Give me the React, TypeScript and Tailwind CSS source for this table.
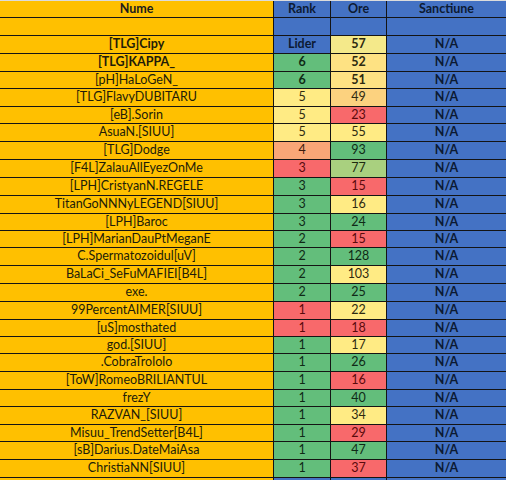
const ROWS = [
  { name: '[TLG]Cipy', rank: 'Lider', ore: '57', rc: 'blue', oc: 'pale', bold: true, h: 18 },
  { name: '[TLG]KAPPA_', rank: '6', ore: '52', rc: 'green', oc: 'peach', bold: true, h: 18 },
  { name: '[pH]HaLoGeN_', rank: '6', ore: '51', rc: 'green', oc: 'peach', strong: true, h: 17 },
  { name: '[TLG]FlavyDUBITARU', rank: '5', ore: '49', rc: 'yellow', oc: 'orange', h: 18 },
  { name: '[eB].Sorin', rank: '5', ore: '23', rc: 'yellow', oc: 'red', h: 17 },
  { name: 'AsuaN.[SIUU]', rank: '5', ore: '55', rc: 'yellow', oc: 'yellow', h: 18 },
  { name: '[TLG]Dodge', rank: '4', ore: '93', rc: 'salmon', oc: 'green', h: 18 },
  { name: '[F4L]ZalauAllEyezOnMe', rank: '3', ore: '77', rc: 'red', oc: 'lime', h: 18 },
  { name: '[LPH]CristyanN.REGELE', rank: '3', ore: '15', rc: 'green', oc: 'red', h: 18 },
  { name: 'TitanGoNNNyLEGEND[SIUU]', rank: '3', ore: '16', rc: 'green', oc: 'yellow', h: 18 },
  { name: '[LPH]Baroc', rank: '3', ore: '24', rc: 'green', oc: 'green', h: 17 },
  { name: '[LPH]MarianDauPtMeganE', rank: '2', ore: '15', rc: 'green', oc: 'red', h: 17 },
  { name: 'C.Spermatozoidul[uV]', rank: '2', ore: '128', rc: 'green', oc: 'green', h: 18 },
  { name: 'BaLaCi_SeFuMAFIEI[B4L]', rank: '2', ore: '103', rc: 'green', oc: 'yellow', h: 18 },
  { name: 'exe.', rank: '2', ore: '25', rc: 'green', oc: 'green', h: 18 },
  { name: '99PercentAIMER[SIUU]', rank: '1', ore: '22', rc: 'red', oc: 'yellow', h: 18 },
  { name: '[uS]mosthated', rank: '1', ore: '18', rc: 'red', oc: 'red', h: 17 },
  { name: 'god.[SIUU]', rank: '1', ore: '17', rc: 'green', oc: 'yellow', h: 17 },
  { name: '.CobraTrololo', rank: '1', ore: '26', rc: 'green', oc: 'green', h: 18 },
  { name: '[ToW]RomeoBRILIANTUL', rank: '1', ore: '16', rc: 'green', oc: 'red', h: 18 },
  { name: 'frezY', rank: '1', ore: '40', rc: 'green', oc: 'green', h: 17 },
  { name: 'RAZVAN_[SIUU]', rank: '1', ore: '34', rc: 'green', oc: 'yellow', h: 18 },
  { name: 'Misuu_TrendSetter[B4L]', rank: '1', ore: '29', rc: 'green', oc: 'red', h: 17 },
  { name: '[sB]Darius.DateMaiAsa', rank: '1', ore: '47', rc: 'green', oc: 'green', h: 18 },
  { name: 'ChristiaNN[SIUU]', rank: '1', ore: '37', rc: 'green', oc: 'red', h: 18 },
]

const FILL: Record<string, string> = {
  blue: 'bg-[#4472c4] text-[#0c1a33] font-bold',
  green: 'bg-[#63be7b] text-[#0f2a16]',
  red: 'bg-[#f8696b] text-[#5a0a0c]',
  yellow: 'bg-[#ffeb84] text-[#2e2a10]',
  pale: 'bg-[#f4e98a] text-[#2e2a10]',
  peach: 'bg-[#fee283] text-[#2e2a10]',
  orange: 'bg-[#fcd27f] text-[#2e2a10]',
  salmon: 'bg-[#f9a677] text-[#3a1a0c]',
  lime: 'bg-[#a9d07f] text-[#1e2a10]',
}

const line = 'border-b border-[#141414]'
const cell = 'flex items-center justify-center border-r border-[#141414]'

function Row({ h, children }: { h: number; children: React.ReactNode }) {
  return (
    <div
      className={`grid grid-cols-[274px_57px_56px_119px] ${line}`}
      style={{ height: h }}
    >
      {children}
    </div>
  )
}

export default function App() {
  return (
    <div
      className="w-[506px] h-[480px] overflow-hidden bg-white text-[12.5px] leading-none"
      style={{ fontFamily: 'Lato, "Noto Sans", sans-serif' }}
    >
      <div className="h-px bg-[#dcdcdc]" />

      <Row h={17}>
        <div className={`${cell} bg-[#ffc000] font-bold text-[#1c1c1c]`}>Nume</div>
        <div className={`${cell} bg-[#4472c4] font-bold text-[#0c1a33]`}>Rank</div>
        <div className={`${cell} bg-[#4472c4] font-bold text-[#0c1a33]`}>Ore</div>
        <div className="flex items-center justify-center bg-[#4472c4] font-bold text-[#0c1a33]">
          Sanctiune
        </div>
      </Row>

      <Row h={18}>
        <div className={`${cell} bg-[#ffc000]`} />
        <div className={`${cell} bg-[#4472c4]`} />
        <div className={`${cell} bg-[#4472c4]`} />
        <div className="bg-[#4472c4]" />
      </Row>

      {ROWS.map((r) => (
        <Row key={r.name} h={r.h}>
          <div className={`${cell} bg-[#ffc000] text-[#211c08] ${r.bold ? 'font-bold' : ''}`}>
            {r.name}
          </div>
          <div className={`${cell} ${FILL[r.rc]} ${r.bold || r.strong ? 'font-bold' : ''}`}>
            {r.rank}
          </div>
          <div className={`${cell} ${FILL[r.oc]} ${r.bold || r.strong ? 'font-bold' : ''}`}>
            {r.ore}
          </div>
          <div className="flex items-center justify-center bg-[#4472c4] font-bold text-[#0c1a33]">
            N/A
          </div>
        </Row>
      ))}

      <Row h={10}>
        <div className={`${cell} bg-[#ffc000]`} />
        <div className={`${cell} bg-[#4472c4]`} />
        <div className={`${cell} bg-[#4472c4]`} />
        <div className="bg-[#4472c4]" />
      </Row>
    </div>
  )
}
